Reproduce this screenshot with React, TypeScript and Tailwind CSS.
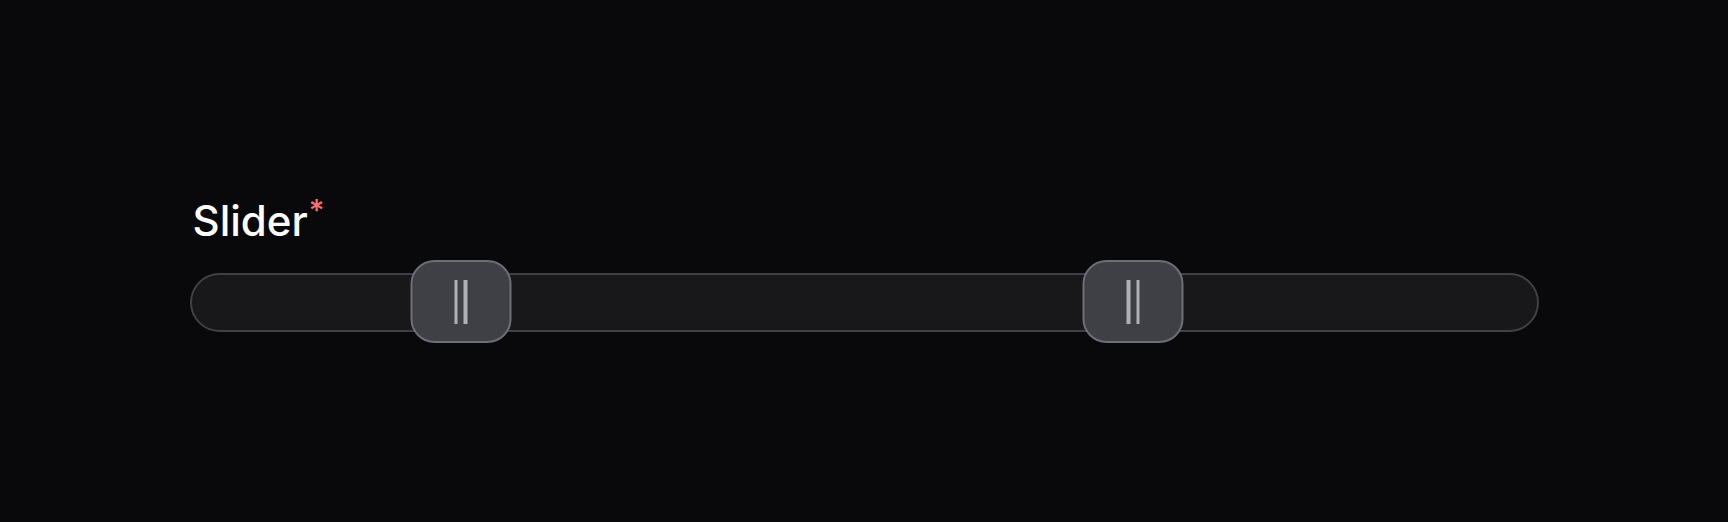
import { useState } from 'react';

function Thumb({ left }: { left: number }) {
  return (
    <div
      className="absolute top-[-15px] flex h-[83px] w-[101px] -translate-x-1/2 items-center justify-center gap-[6px] rounded-[24px] border-[2.5px] border-[#6e6e76] bg-[#3f3f46]"
      style={{ left: `${left}%` }}
    >
      <span className="h-[44px] w-[3.5px] bg-[#b0b0b8]" />
      <span className="h-[44px] w-[3.5px] bg-[#b0b0b8]" />
    </div>
  );
}

export default function App() {
  const [values] = useState<[number, number]>([20, 70]);

  return (
    <div
      className="min-h-screen bg-[#09090b] pt-[200px]"
      style={{ fontFamily: 'Inter, "Noto Sans", sans-serif' }}
    >
      <div className="mx-auto w-[1349px]">
        <div className="mb-[31px] flex items-start pl-[3px]">
          <span className="text-[42px] font-medium leading-[42px] text-white">Slider</span>
          <span className="ml-[1px] mt-[-5px] text-[30px] font-medium leading-[30px] text-[#f87171]">*</span>
        </div>
        <div className="relative h-[59px] rounded-full border-[2.5px] border-[#404046] bg-[#18181b]">
          <Thumb left={values[0]} />
          <Thumb left={values[1]} />
        </div>
      </div>
    </div>
  );
}
